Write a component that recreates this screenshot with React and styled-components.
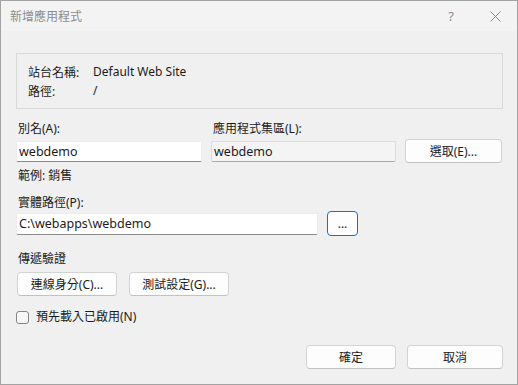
import React from "react";
import styled, { createGlobalStyle } from "styled-components";

let GlobalStyle = createGlobalStyle`
  html, body {
    margin: 0;
    padding: 0;
    background: #f0f0f0;
  }
  body {
    font-family: "Segoe UI", "Noto Sans", "Noto Sans CJK TC", sans-serif;
    font-size: 12px;
    color: #1b1b1b;
  }
`;

let Window = styled.div`
  width: 518px;
  height: 385px;
  box-sizing: border-box;
  border: 1px solid #a3a3a3;
  background: #f0f0f0;
  display: flex;
  flex-direction: column;
`;

let TitleBar = styled.div`
  height: 30px;
  flex: none;
  display: flex;
  align-items: center;
  background: #f3f3f3;
  padding-left: 9px;
  color: #8c8c8c;

  .title {
    flex: 1;
    font-size: 12px;
    font-family: "Noto Sans CJK TC", sans-serif;
    margin-top: -1px;
  }
`;

let TitleButton = styled.div`
  width: 44px;
  height: 30px;
  display: flex;
  align-items: center;
  justify-content: center;
  color: #8a8a8a;
  font-size: 13px;
  font-family: "Noto Sans", sans-serif;
`;

let Body = styled.div`
  flex: 1;
  padding: 22px 14px 0 15px;
  display: flex;
  flex-direction: column;
`;

let InfoBox = styled.div`
  height: 56px;
  box-sizing: border-box;
  border: 1px solid #dadada;
  padding: 8px 11px;
  display: grid;
  grid-template-columns: 65px 1fr;
  grid-auto-rows: 19px;
  align-items: center;
`;

let FieldGrid = styled.div`
  margin-top: 11px;
  display: grid;
  grid-template-columns: 186px 185px 97px;
  column-gap: 9px;
  align-items: center;
`;

let Label = styled.div`
  line-height: 17px;
  padding-left: 2px;
  margin-bottom: ${(p) => p.$gap ?? 2}px;
`;

let Hint = styled.div`
  line-height: 16px;
  padding-left: 2px;
  margin-top: 5px;
`;

let TextBox = styled.div`
  height: ${(p) => p.$height ?? 21}px;
  width: ${(p) => (p.$width ? `${p.$width}px` : "auto")};
  box-sizing: border-box;
  border: 1px solid ${(p) => (p.$disabled ? "#dcdcdc" : "#ececec")};
  border-bottom-color: ${(p) => (p.$disabled ? "#a9a9a9" : "#8a8a8a")};
  border-radius: 2px;
  background: ${(p) => (p.$disabled ? "#f4f4f4" : "#ffffff")};
  display: flex;
  align-items: center;
  padding-left: 2px;
  font-size: 12.5px;
`;

let Button = styled.button`
  height: ${(p) => p.$height ?? 24}px;
  width: ${(p) => p.$width}px;
  box-sizing: border-box;
  border: 1px solid ${(p) => (p.$primary ? "#1a6fc4" : "#d3d3d3")};
  border-bottom-color: ${(p) => (p.$primary ? "#1a6fc4" : "#c2c2c2")};
  border-radius: 4px;
  background: #fdfdfd;
  font-family: inherit;
  font-size: 12px;
  color: #1b1b1b;
  padding: 0;
  display: flex;
  align-items: center;
  justify-content: center;
`;

let PathRow = styled.div`
  display: flex;
  align-items: center;
  gap: 9px;
  width: 100%;
`;

let Section = styled.div`
  display: flex;
  flex-direction: column;
  margin-top: ${(p) => p.$top}px;
`;

let ButtonRow = styled.div`
  display: flex;
  gap: ${(p) => p.$gap}px;
  justify-content: ${(p) => (p.$end ? "flex-end" : "flex-start")};
  padding-left: ${(p) => (p.$end ? 0 : 1)}px;
  margin-top: ${(p) => p.$top ?? 0}px;
`;

let CheckRow = styled.label`
  display: flex;
  align-items: center;
  gap: 7px;
  margin-top: 13px;
  line-height: 16px;
`;

let CheckBox = styled.span`
  width: 13px;
  height: 13px;
  box-sizing: border-box;
  border: 1px solid #858585;
  border-radius: 3px;
  background: #f7f7f7;
`;

export default function App() {
  return (
    <>
      <GlobalStyle />
      <Window>
        <TitleBar>
          <span className="title">新增應用程式</span>
          <TitleButton>?</TitleButton>
          <TitleButton>
            <svg width="11" height="11" viewBox="0 0 11 11">
              <path d="M0.5 0.5 L10.5 10.5 M10.5 0.5 L0.5 10.5" stroke="#8a8a8a" strokeWidth="1" />
            </svg>
          </TitleButton>
        </TitleBar>
        <Body>
          <InfoBox>
            <span>站台名稱:</span>
            <span>Default Web Site</span>
            <span>路徑:</span>
            <span>/</span>
          </InfoBox>

          <FieldGrid>
            <Label>別名(A):</Label>
            <Label>應用程式集區(L):</Label>
            <span />
            <TextBox>webdemo</TextBox>
            <TextBox $disabled>webdemo</TextBox>
            <Button $width={97}>選取(E)...</Button>
            <Hint>範例: 銷售</Hint>
          </FieldGrid>

          <Section $top={10}>
            <Label $gap={0}>實體路徑(P):</Label>
            <PathRow>
              <TextBox $width={302} $height={22}>C:\webapps\webdemo</TextBox>
              <Button $width={31} $height={25} $primary>...</Button>
            </PathRow>
          </Section>

          <Section $top={14}>
            <Label $gap={5}>傳遞驗證</Label>
            <ButtonRow $gap={12}>
              <Button $width={100}>連線身分(C)...</Button>
              <Button $width={100}>測試設定(G)...</Button>
            </ButtonRow>
          </Section>

          <CheckRow>
            <CheckBox />
            <span>預先載入已啟用(N)</span>
          </CheckRow>

          <ButtonRow $end $gap={11} $top={20}>
            <Button $width={90}>確定</Button>
            <Button $width={96}>取消</Button>
          </ButtonRow>
        </Body>
      </Window>
    </>
  );
}
